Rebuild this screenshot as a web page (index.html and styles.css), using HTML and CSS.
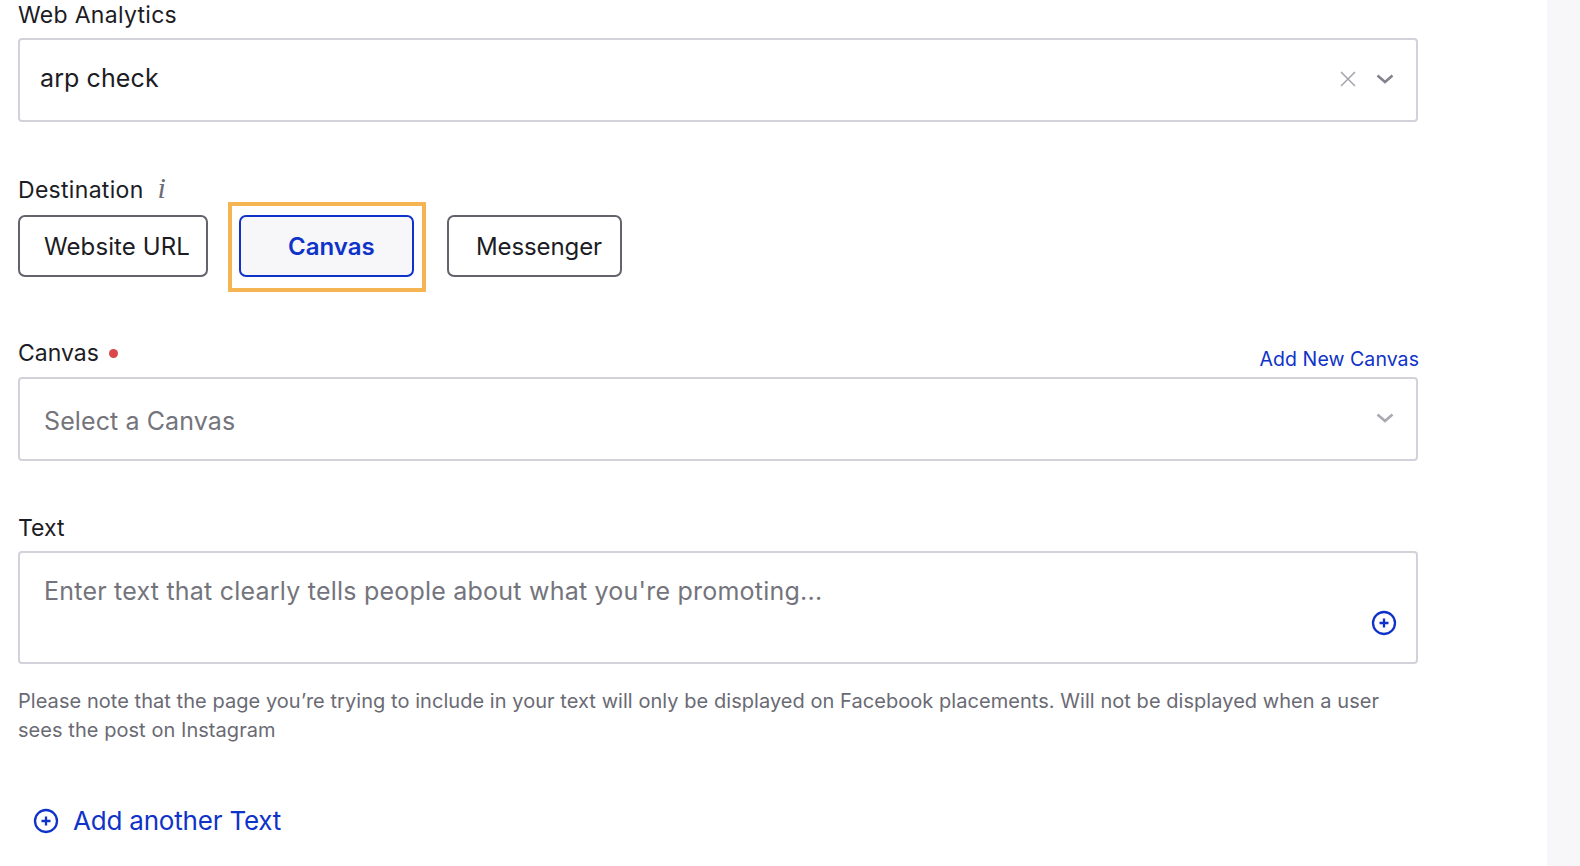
FILE: index.html
```html
<!DOCTYPE html>
<html lang="en">
<head>
<meta charset="utf-8">
<title>Ad form</title>
<link rel="stylesheet" href="styles.css">
</head>
<body>
<div class="page">
  <main class="form">
    <section class="field">
      <div class="label-row"><label class="label label-wide">Web Analytics</label></div>
      <div class="box select">
        <span class="value">arp check</span>
        <span class="box-icons">
          <svg class="icon-x" width="18" height="18" viewBox="0 0 18 18"><path d="M2 2 L16 16 M16 2 L2 16" fill="none" stroke="#a3a3ad" stroke-width="1.5"/></svg>
          <svg class="chev" width="18" height="10" viewBox="0 0 18 10"><path d="M1.5 1.5 L9 8 L16.5 1.5" fill="none" stroke="#83838d" stroke-width="2.6"/></svg>
        </span>
      </div>
    </section>

    <section class="field dest">
      <div class="label-row"><label class="label label-wide">Destination</label><span class="info">i</span></div>
      <div class="buttons">
        <button class="btn btn-url">Website URL</button>
        <button class="btn btn-canvas">Canvas</button>
        <button class="btn btn-msg">Messenger</button>
      </div>
    </section>

    <section class="field canvas">
      <div class="label-row between">
        <span class="req"><label class="label">Canvas</label><i class="dot"></i></span>
        <a class="link">Add New Canvas</a>
      </div>
      <div class="box select">
        <span class="placeholder">Select a Canvas</span>
        <span class="box-icons">
          <svg class="chev" width="18" height="10" viewBox="0 0 18 10"><path d="M1.5 1.5 L9 8 L16.5 1.5" fill="none" stroke="#a9a9b1" stroke-width="2.6"/></svg>
        </span>
      </div>
    </section>

    <section class="field text">
      <div class="label-row"><label class="label">Text</label></div>
      <div class="box area">
        <span class="placeholder area-ph">Enter text that clearly tells people about what you're promoting...</span>
        <svg class="plus area-plus" width="26" height="26" viewBox="0 0 26 26"><circle cx="13" cy="13" r="11" fill="none" stroke="#0f33c9" stroke-width="2.3"/><path d="M13 8.5 V17.5 M8.5 13 H17.5" fill="none" stroke="#0f33c9" stroke-width="2.3"/></svg>
      </div>
      <p class="note">Please note that the page you’re trying to include in your text will only be displayed on Facebook placements. Will not be displayed when a user sees the post on Instagram</p>
    </section>

    <a class="add">
      <svg class="plus" width="26" height="26" viewBox="0 0 26 26"><circle cx="13" cy="13" r="11" fill="none" stroke="#0f33c9" stroke-width="2.3"/><path d="M13 8.5 V17.5 M8.5 13 H17.5" fill="none" stroke="#0f33c9" stroke-width="2.3"/></svg>
      <span>Add another Text</span>
    </a>
  </main>
  <aside class="side"></aside>
</div>
</body>
</html>
```

FILE: styles.css
```css
* { box-sizing: border-box; }
html, body { margin: 0; padding: 0; height: 100%; overflow: hidden; background: #fff; }
body { font-family: Inter, "Noto Sans", sans-serif; font-optical-sizing: none; color: #1c1c24; }
.page { display: flex; height: 866px; }
.form { width: 1547px; padding-left: 18px; }
.side { flex: 1; background: #f7f7f9; }
.field { width: 1400px; }
.label-row { display: flex; align-items: center; height: 30px; }
.between { justify-content: space-between; }
.label { font-size: 23px; line-height: 30px; }
.label-wide { letter-spacing: 0.3px; }
.box { border: 2px solid #d2d2da; border-radius: 4px; background: #fff; display: flex; }
.select { height: 84px; margin-top: 8px; align-items: center; justify-content: space-between; }
.value { font-size: 25px; padding-left: 20px; padding-bottom: 4px; letter-spacing: 0.1px; color: #1c1c24; }
.placeholder { font-size: 25px; color: #74747c; }
.select .placeholder { padding-left: 24px; padding-top: 4px; letter-spacing: 0.1px; }
.box-icons { display: flex; align-items: center; gap: 19px; padding-right: 22px; padding-bottom: 2px; }
.icon-x { display: block; }
.chev { display: block; }
.dest { margin-top: 53px; }
.info { font-family: "Liberation Serif", serif; font-style: italic; font-size: 30px; color: #6c6c76; margin-left: 14px; line-height: 30px; margin-top: -4px; }
.buttons { display: flex; margin-top: 10px; }
.btn { height: 62px; font-family: inherit; font-size: 24px; color: #1c1c24; background: #fff; border: 2px solid #63636d; border-radius: 7px; text-align: left; padding: 0; position: relative; margin: 0; }
.btn-url { width: 190px; padding-left: 24px; letter-spacing: 0.1px; }
.btn-canvas { width: 175px; margin-left: 31px; padding-left: 47px; border-color: #0f33c9; background: #f7f7fa; color: #0f33c9; font-weight: 600; }
.btn-canvas::after { content: ""; position: absolute; left: -13px; right: -14px; top: -15px; bottom: -17px; border: 4px solid #f5b553; }
.btn-msg { width: 175px; margin-left: 33px; padding-left: 27px; letter-spacing: -0.1px; }
.canvas { margin-top: 61px; }
.canvas .select { margin-top: 9px; }
.req { display: flex; align-items: center; }
.dot { width: 9px; height: 9px; border-radius: 50%; background: #d9484a; margin-left: 10px; }
.link { font-size: 19.5px; letter-spacing: 0.07px; color: #0f33c9; padding-top: 11px; margin-right: -1px; }
.text { margin-top: 52px; }
.area { height: 113px; margin-top: 8px; position: relative; padding: 22px 24px; }
.area-ph { line-height: 32px; letter-spacing: 0.22px; }
.area-plus { position: absolute; right: 19px; top: 57px; }
.note { margin: 23px 0 0; font-size: 20px; line-height: 29px; letter-spacing: 0.05px; color: #6a6a74; }
.add { display: flex; align-items: center; gap: 14px; margin-top: 60px; margin-left: 15px; color: #0f33c9; font-size: 26px; letter-spacing: -0.2px; }
```
